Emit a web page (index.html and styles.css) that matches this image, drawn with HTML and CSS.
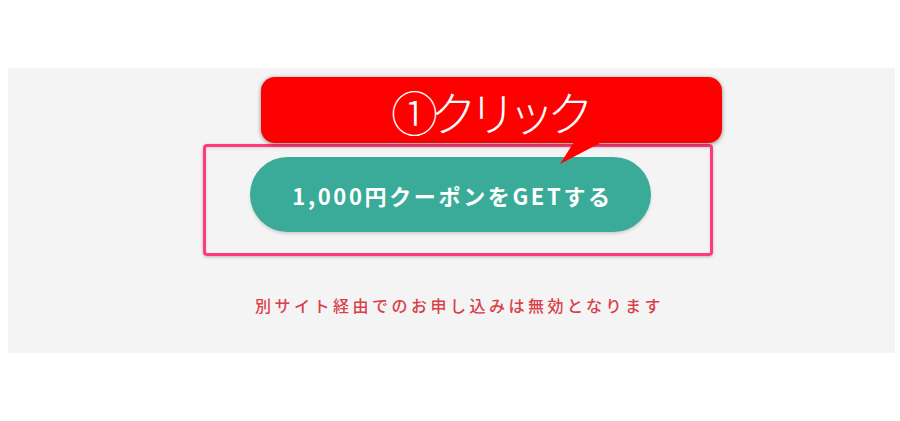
FILE: index.html
```html
<!DOCTYPE html>
<html lang="ja">
<head>
<meta charset="utf-8">
<link rel="stylesheet" href="styles.css">
</head>
<body>
<div class="page">
  <section class="panel">
    <div class="stage">
      <div class="frame">
        <a class="cta">1,000円クーポンをGETする</a>
      </div>
      <div class="callout">
        <span class="callout-text">①クリック</span>
        <svg class="tail" width="50" height="24" viewBox="0 0 50 24"><polygon points="14,0 42,0 0,22" fill="#ff0000"/></svg>
      </div>
    </div>
    <p class="note">別サイト経由でのお申し込みは無効となります</p>
  </section>
</div>
</body>
</html>
```
FILE: styles.css
```css
html, body { margin: 0; padding: 0; background: #ffffff; }
body { font-family: "Noto Sans CJK JP", "Noto Sans", sans-serif; width: 900px; height: 421px; overflow: hidden; }
.page { padding-top: 68px; padding-left: 8px; }
.panel { width: 887px; height: 285px; background: #f4f4f4; box-sizing: border-box; padding-top: 76px; }
.stage { position: relative; margin-left: 195px; width: 510px; }
.frame {
  box-sizing: border-box; width: 510px; height: 112px;
  border: 3px solid #ff3b77; border-radius: 4px;
  box-shadow: 0 1px 3px rgba(0,0,0,0.25), inset 0 1px 3px rgba(0,0,0,0.12);
  padding-top: 10px; padding-left: 44px;
}
.cta {
  display: flex; align-items: center; justify-content: center;
  width: 401px; height: 75px; border-radius: 38px;
  background: #3aab99; color: #ffffff;
  font-weight: 700; font-size: 22px; letter-spacing: 0.12em;
  box-shadow: 0 2px 3px rgba(0,0,0,0.15);
  padding-left: 4px; box-sizing: border-box;
}
.callout {
  position: absolute; left: 58px; top: -67px;
  width: 461px; height: 66px; border-radius: 14px;
  background: #ff0000;
  box-shadow: 0 1px 4px rgba(0,0,0,0.45);
  display: flex; align-items: center; justify-content: center;
}
.callout-text {
  color: #ffffff; font-size: 47px; line-height: 1; letter-spacing: -8px;
  font-family: "Noto Sans CJK JP", sans-serif; font-weight: 300;
  margin-top: 1px; margin-left: -6px;
}
.tail { position: absolute; left: 299px; top: 65px; }
.note {
  margin: 37px 0 0 0; text-align: center; padding-left: 16px;
  color: #d9404a; font-size: 16px; font-weight: 500; letter-spacing: 3.5px; line-height: 24px;
}
```
